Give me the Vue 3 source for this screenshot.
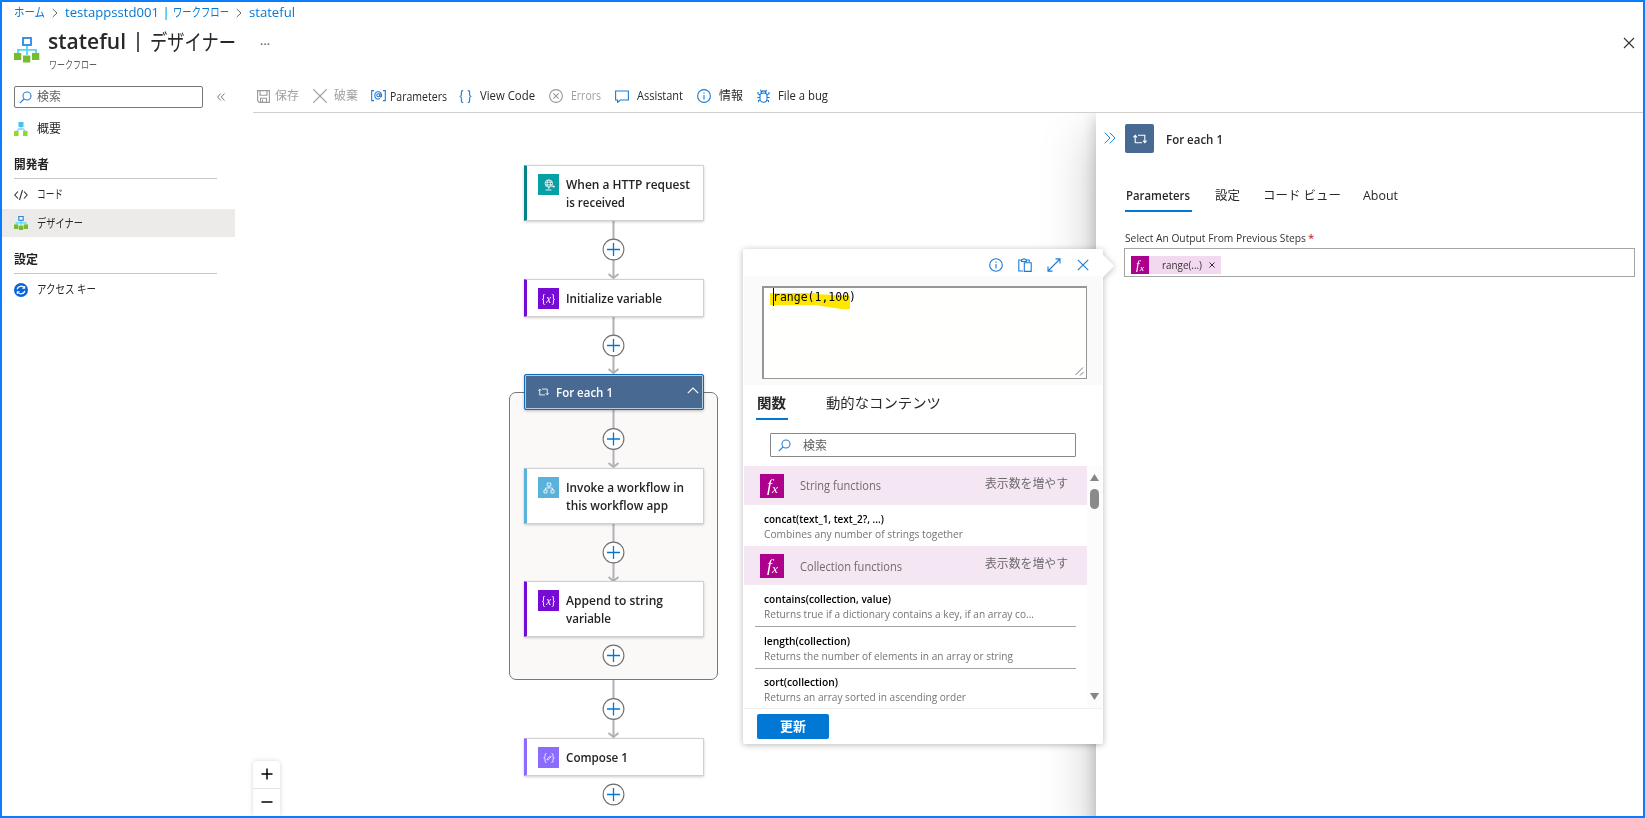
<script setup>
// Condenses or widens a run of text to a given width in pixels.
const vFit = {
  mounted(el, { value }) {
    const natural = el.getBoundingClientRect().width
    if (!natural) return
    el.style.transform = `scaleX(${value / natural})`
    el.style.marginRight = `${value - natural}px`
  }
}

const tools = [
  { icon: 'save', label: '保存', w: 24, off: true },
  { icon: 'discard', label: '破棄', w: 24, off: true },
  { icon: 'params', label: 'Parameters', w: 57 },
  { icon: 'braces', label: 'View Code', w: 55 },
  { icon: 'errors', label: 'Errors', w: 30, off: true },
  { icon: 'chat', label: 'Assistant', w: 46 },
  { icon: 'info', label: '情報', w: 24 },
  { icon: 'bug', label: 'File a bug', w: 50 }
]

const nodes = [
  { kind: 'http', top: 165, tall: true, lines: [['When a HTTP request', 124], ['is received', 59]] },
  { kind: 'variable', top: 279, lines: [['Initialize variable', 96]] },
  { kind: 'invoke', top: 468, tall: true, lines: [['Invoke a workflow in', 118], ['this workflow app', 102]] },
  { kind: 'variable', top: 581, tall: true, lines: [['Append to string', 97], ['variable', 45]] },
  { kind: 'compose', top: 738, lines: [['Compose 1', 62]] }
]

const edges = [[221, 278], [317, 373], [410, 467], [524, 581], [680, 737]]
const plusYs = [249.5, 345.5, 439, 552.5, 655.5, 709, 794.5]
</script>

<template>
  <div class="portal">
    <nav class="crumbs">
      <span v-fit="31">ホーム</span>
      <svg class="c1" width="6" height="10" viewBox="0 0 6 10"><path d="M.7 1 5 5 .7 9" /></svg>
      <span class="lat" v-fit="94">testappsstd001</span>
      <span class="bar">|</span>
      <span v-fit="56">ワークフロー</span>
      <svg class="c2" width="6" height="10" viewBox="0 0 6 10"><path d="M.7 1 5 5 .7 9" /></svg>
      <span class="lat" v-fit="46">stateful</span>
    </nav>

    <header class="head">
      <svg class="logo" width="26" height="26" viewBox="0 0 26 26">
        <path d="M13 9v9M4 17v-4.2h18V17" fill="none" stroke="#50d8f7" stroke-width="1.8" />
        <rect x="9" y="1" width="8" height="7" fill="#fff" stroke="#2f86dc" stroke-width="1.8" />
        <path d="M0 16h7.3v7H0zM9 18.500h7.3v7H9zM18 16h7.300v7H18z" fill="#76bc2d" />
      </svg>
      <div class="titles">
        <h1><span class="strong" v-fit="78">stateful</span><i></i><span v-fit="86">デザイナー</span></h1>
        <p><span v-fit="48">ワークフロー</span></p>
      </div>
      <span class="dots">…</span>
      <svg class="close" width="12" height="12" viewBox="0 0 12 12"><path d="M1 1l10 10M11 1 1 11" /></svg>
    </header>

    <div class="body">
      <aside>
        <div class="find-row">
          <div class="find">
            <svg width="13" height="13" viewBox="0 0 13 13"><circle cx="8" cy="5" r="4" /><path d="M5 8 .8 12.200" /></svg>
            <span v-fit="24">検索</span>
          </div>
          <svg class="fold" width="8" height="8" viewBox="0 0 8 8"><path d="M3.800.5.6 4l3.200 3.500M7.500.5 4.300 4l3.200 3.500" /></svg>
        </div>
        <div class="item first">
          <svg width="14" height="14" viewBox="0 0 14 14"><path d="M7 5v3M2.500 10l2-3h5l2 3" fill="none" stroke="#8bd9ef" stroke-width="1.500" /><path d="M4.500 0h5v5h-5z" fill="#45c3ee" /><path d="M0 9h4.500v5H0zM9 9h4.500v5H9z" fill="#8fdc1f" /></svg>
          <span v-fit="24">概要</span>
        </div>
        <h2 class="h-dev"><span v-fit="35">開発者</span></h2>
        <div class="item code">
          <svg width="14" height="12" viewBox="0 0 14 12"><path d="M4 2.500.8 6 4 9.500M10 2.500 13.200 6 10 9.500M8.500 1l-3 10" fill="none" stroke="#333" stroke-width="1.100" /></svg>
          <span v-fit="26">コード</span>
        </div>
        <div class="item active">
          <svg width="14" height="14" viewBox="0 0 26 26">
            <path d="M13 9v9M4 17v-4.200h18V17" fill="none" stroke="#50d8f7" stroke-width="2" />
            <rect x="9" y="1" width="8" height="7" fill="#fff" stroke="#2f86dc" stroke-width="2.200" />
            <path d="M0 16h8v8H0zM9 18h8v8H9zM18 16h8v8h-8z" fill="#76bc2d" />
          </svg>
          <span v-fit="46">デザイナー</span>
        </div>
        <h2 class="h-set"><span v-fit="24">設定</span></h2>
        <div class="item keys">
          <svg width="14" height="14" viewBox="0 0 14 14"><circle cx="7" cy="7" r="7" fill="#0a62dc" /><path d="M3.300 6.300C3.600 3 8.500 2 10.500 5M10.700 7.700c-.3 3.300-5.200 4.300-7.200 1.300" fill="none" stroke="#fff" stroke-width="1.300" /><path d="M10.700 3v2.300H8.300M3.300 11V8.700h2.400" fill="none" stroke="#fff" stroke-width="1.100" /></svg>
          <span v-fit="59">アクセス キー</span>
        </div>
      </aside>

      <main>
        <div class="toolbar">
          <div v-for="t in tools" :key="t.icon" class="tool" :class="[t.icon, { off: t.off }]">
            <svg v-if="t.icon === 'save'" width="13" height="13" viewBox="0 0 13 13"><path d="M.6.6h11.800v11.800H2.300L.6 10.700zM3 .6v4.700h7V.6M3.500 12V8.300h6V12M5.500 9.500v2.700" /></svg>
            <svg v-else-if="t.icon === 'discard'" width="14" height="14" viewBox="0 0 14 14"><path d="M.3.3l13.400 13.400M13.700.3.3 13.700" /></svg>
            <svg v-else-if="t.icon === 'params'" width="15" height="12" viewBox="0 0 15 12"><path d="M3 .6H.7v10H3M12 .6h2.300v10H12" /><circle cx="7.300" cy="5.300" r="1.500" /><path d="M9 3.500v2.800c.2 1.100 1.600.8 1.600-.8 0-5.200-6.800-4.700-6.800 0 0 3.300 2.800 4.100 5 3" /></svg>
            <svg v-else-if="t.icon === 'braces'" width="13" height="13" viewBox="0 0 13 13"><path d="M4.200.6H3.600Q2.400.6 2.400 2v2.800Q2.400 6.500.6 6.500 2.400 6.500 2.400 8.200V11q0 1.400 1.200 1.400h.6M8.800.6h.6q1.200 0 1.200 1.400v2.800q0 1.700 1.800 1.700-1.800 0-1.800 1.700V11q0 1.400-1.200 1.400h-.6" /></svg>
            <svg v-else-if="t.icon === 'errors'" width="14" height="14" viewBox="0 0 14 14"><circle cx="7" cy="7" r="6.400" /><path d="M4.300 4.300l5.400 5.400M9.700 4.300 4.300 9.700" /></svg>
            <svg v-else-if="t.icon === 'chat'" width="14" height="13" viewBox="0 0 14 13"><path d="M.6 1h12.800v9H5.300L2.600 12.400V10h-2z" /></svg>
            <svg v-else-if="t.icon === 'info'" width="14" height="14" viewBox="0 0 14 14"><circle cx="7" cy="7" r="6.400" /><path d="M7 6v4.500M7 3.500v1.200" /></svg>
            <svg v-else width="13" height="14" viewBox="0 0 13 14"><path d="M3 6.500C3 4.600 4.300 4 6.500 4s3.500.6 3.500 2.500v3c0 2.200-1.400 3.800-3.500 3.800S3 11.700 3 9.500zM4 4c0-2.800 5-2.800 5 0M3 6 1 4.700V3M10 6l2-1.300V3M3 8.500H.3M10 8.500h2.700M3.400 10.700l-1.900 1v1.500M9.600 10.700l1.900 1v1.500M4.300 2.500 3.500.7M8.700 2.500 9.500.7" /></svg>
            <span v-fit="t.w">{{ t.label }}</span>
          </div>
        </div>
      </main>
    </div>

    <!-- Designer canvas -->
    <section class="canvas">
      <div class="scope"></div>
      <svg class="wires" width="1645" height="818" viewBox="0 0 1645 818">
        <g v-for="e in edges" :key="e[0]" fill="none" stroke="#b1b1b7" stroke-width="2">
          <path :d="`M613.500 ${e[0]}V${e[1]}`" />
          <path :d="`M608.500 ${e[1] - 4}l5 4 5-4`" />
        </g>
        <g v-for="y in plusYs" :key="y">
          <circle cx="613.500" :cy="y" r="10.400" fill="#fff" stroke="#707070" stroke-width="1.100" />
          <path :d="`M607 ${y}h13M613.500 ${y - 6.5}v13`" stroke="#0078d4" stroke-width="1.300" />
        </g>
      </svg>

      <div v-for="n in nodes" :key="n.top" class="node" :class="[n.kind, { tall: n.tall }, 'y' + n.top]">
        <div class="tile">
          <svg v-if="n.kind === 'http'" width="12" height="12" viewBox="0 0 12 12"><circle cx="5.800" cy="4.500" r="3.700" /><path d="M2.100 3.300h7.400M2.100 5.800h7.400M5.800.8c-2.300 2-2.300 5.500 0 7.400 2.300-2 2.300-5.400 0-7.400M5.800 8v2.500M2.500 11h6M9 7.500h2.500M10.500 6.300l1.200 1.200-1.200 1.200" /></svg>
          <svg v-else-if="n.kind === 'invoke'" width="12" height="12" viewBox="0 0 12 12"><path d="M4.200 1h3.600v3H4.200zM1 8h3v3H1zM8 8h3v3H8zM6 4v2M2.500 8V6h7v2" /></svg>
          <svg v-else-if="n.kind === 'compose'" width="12" height="12" viewBox="0 0 12 12"><path d="M3.500 1.500Q2 1.500 2 3v1.500Q2 6 .7 6 2 6 2 7.500V9q0 1.500 1.500 1.500M8.500 1.500Q10 1.500 10 3v1.500Q10 6 11.300 6 10 6 10 7.500V9q0 1.500-1.500 1.500M4 8l.4-1.400L7.300 4l.8.800-2.800 2.800z" /></svg>
          <span v-else class="var" v-fit="15">{<em>x</em>}</span>
        </div>
        <div class="name"><div v-for="l in n.lines" :key="l[0]"><span v-fit="l[1]">{{ l[0] }}</span></div></div>
      </div>

      <div class="foreach">
        <svg width="11" height="8" viewBox="0 0 14 10"><path d="M2.200 9V1.500M.4 3.300 2.200 1.300 4 3.300M5 1.300h6.800V8.500M13.600 6.700l-1.800 2-1.800-2M9 8.700H2.200" /></svg>
        <span v-fit="57">For each 1</span>
        <svg class="up" width="12" height="7" viewBox="0 0 12 7"><path d="M.8 6.200 6 1l5.200 5.200" /></svg>
      </div>

      <div class="zoomer"><b><svg width="12" height="12" viewBox="0 0 12 12"><path d="M.5 6h11M6 .5v11" /></svg></b><b><svg width="12" height="12" viewBox="0 0 12 12"><path d="M.5 6h11" /></svg></b></div>
    </section>

    <!-- Action details -->
    <div class="panel-clip">
      <section class="panel">
        <div class="p-head">
          <svg class="chev" width="12" height="12" viewBox="0 0 12 12"><path d="M.8.7 6 6 .8 11.300M5.800.7 11 6l-5.200 5.300" /></svg>
          <div class="p-icon"><svg width="14" height="10" viewBox="0 0 14 10"><path d="M2.200 9V1.500M.4 3.300 2.200 1.300 4 3.300M5 1.300h6.800V8.500M13.600 6.700l-1.800 2-1.800-2M9 8.700H2.200" /></svg></div>
          <span class="p-name"><span v-fit="57">For each 1</span></span>
        </div>
        <div class="p-tabs">
          <span class="on"><span v-fit="64">Parameters</span></span>
          <span v-fit="25">設定</span>
          <i></i>
          <span v-fit="78">コード ビュー</span>
          <i></i>
          <span v-fit="35">About</span>
        </div>
        <div class="p-label"><span v-fit="181">Select An Output From Previous Steps</span><i>*</i></div>
        <div class="p-input">
          <div class="chip"><span class="fx"><span v-fit="8">f<sub>x</sub></span></span><span class="ct" v-fit="40">range(...)</span><svg width="6" height="6" viewBox="0 0 6 6"><path d="M.5.5l5 5M5.500.5l-5 5" /></svg></div>
        </div>
      </section>
    </div>

    <!-- Expression editor callout -->
    <section class="callout">
      <div class="beak"></div>
      <div class="sheet">
        <div class="acts">
          <svg width="14" height="14" viewBox="0 0 14 14"><circle cx="7" cy="7" r="6.300" /><path d="M7 6v4.500M7 3.500v1.200" /></svg>
          <svg width="14" height="14" viewBox="0 0 14 14"><path d="M5 13H.8V2h2.700M8.500 2h2.700v2M3.500 3.500V1.700h1.300C5 .4 7 .4 7.200 1.700h1.300v1.800zM6.300 4.700h6.900v8.700H6.300z" /></svg>
          <svg width="14" height="14" viewBox="0 0 14 14"><path d="M1 13 13 1M8.500.9H13v4.500M1 8.600v4.500h4.500" /></svg>
          <svg width="12" height="12" viewBox="0 0 12 12"><path d="M.8.8l10.400 10.400M11.200.8.8 11.200" /></svg>
        </div>
        <div class="edit">
          <div class="area">
            <svg class="mark" width="80" height="17" viewBox="0 0 80 17"><path d="M0 0h45v1l35 2v13h-9l-26-4H0z" /></svg>
            <span class="expr" v-fit="83">range(1,100)</span>
            <svg class="grip" width="9" height="9" viewBox="0 0 9 9"><path d="M.5 8 8 .5M5 8.500 8.500 5" /></svg>
          </div>
        </div>
        <div class="tabs"><span class="on"><span v-fit="29">関数</span></span><span class="dyn" v-fit="115">動的なコンテンツ</span></div>
        <div class="search"><svg width="13" height="13" viewBox="0 0 13 13"><circle cx="8" cy="5" r="4" /><path d="M5 8 .8 12.200" /></svg><span v-fit="24">検索</span></div>
        <div class="list">
          <div class="rows">
            <div class="group"><span class="fx"><span v-fit="11">f<sub>x</sub></span></span><span class="gn" v-fit="81">String functions</span><span class="more"><span v-fit="83">表示数を増やす</span></span></div>
            <div class="fn last"><b><span v-fit="120">concat(text_1, text_2?, ...)</span></b><p><span v-fit="199">Combines any number of strings together</span></p></div>
            <div class="group second"><span class="fx"><span v-fit="11">f<sub>x</sub></span></span><span class="gn" v-fit="102">Collection functions</span><span class="more"><span v-fit="83">表示数を増やす</span></span></div>
            <div class="fn"><b><span v-fit="127">contains(collection, value)</span></b><p><span v-fit="270">Returns true if a dictionary contains a key, if an array co...</span></p></div>
            <div class="fn"><b><span v-fit="86">length(collection)</span></b><p><span v-fit="249">Returns the number of elements in an array or string</span></p></div>
            <div class="fn last end"><b><span v-fit="74">sort(collection)</span></b><p><span v-fit="202">Returns an array sorted in ascending order</span></p></div>
          </div>
          <div class="scroll"><svg width="9" height="7" viewBox="0 0 9 7"><path d="M4.500 0 9 7H0z" /></svg><i></i><svg class="dn" width="9" height="7" viewBox="0 0 9 7"><path d="M0 0h9L4.500 7z" /></svg></div>
        </div>
        <div class="foot"><button><span v-fit="26">更新</span></button></div>
      </div>
    </section>
  </div>
</template>

<style>
html, body { margin: 0; overflow: hidden; }
</style>

<style scoped>
* { box-sizing: border-box; }
.portal {
  position: relative; width: 1645px; height: 818px; overflow: hidden; background: #fff;
  border: 2px solid #0a7cff; color: #292827;
  font: 12px/16px "Open Sans", "Noto Sans", "Noto Sans CJK JP", sans-serif;
}
.portal span { display: inline-block; flex: none; white-space: nowrap; transform-origin: 0 50%; }
svg { display: block; flex: none; }
p, h1, h2 { margin: 0; font-weight: 400; }

.crumbs { display: flex; align-items: center; height: 20px; padding: 1px 0 0 12px; color: #0078d4; font-size: 12.500px; }
.crumbs svg { fill: none; stroke: #666; margin: 0 7px; }
.crumbs .bar { width: 14px; text-align: center; }
.crumbs .c2 { margin: 0 7px; }

.head { display: flex; height: 52px; padding-left: 12px; }
.logo { margin-top: 15px; }
.titles { width: 208px; padding-left: 8px; }
h1 { display: flex; align-items: center; height: 35px; padding-top: 3px; font-size: 22px; line-height: 30px; }
h1 i { flex: none; width: 2px; height: 20px; background: #555; margin: 1px 11px 0 11px; }
.strong { font-weight: 600; font-size: 21px; }
.titles p { font-size: 11px; line-height: 14px; padding-left: 1px; margin-top: 1px; color: #605e5c; }
.dots { margin: 10px 0 0 12px; color: #555; font-size: 13px; }
.close { margin: 15px 8px 0 auto; fill: none; stroke: #333; stroke-width: 1.100; }

.body { display: flex; }
aside { width: 233px; }
.find-row { display: flex; align-items: center; padding: 12px 0 0 12px; height: 34px; }
.find { display: flex; align-items: center; gap: 5px; width: 189px; height: 22px; padding-left: 4px; border: 1px solid #777; border-radius: 2px; color: #605e5c; }
.find svg, .search svg { fill: none; stroke: #2f7fd0; stroke-width: 1.100; }
.fold { margin-left: 14px; fill: none; stroke: #666; stroke-width: .9; }
.item { display: flex; align-items: center; gap: 8.500px; height: 28px; padding-left: 12px; }
.item.first { margin-top: 7px; }
h2 { margin-left: 12px; width: 203px; height: 22px; border-bottom: 1px solid #c8c6c4; font-weight: 700; font-size: 12px; line-height: 16px; color: #222; }
.h-dev { margin-top: 14px; }
.item.code { margin-top: 2px; }
.active { background: #edebe9; }
.active span { padding-top: 1px; }
.h-set { margin-top: 15px; }
.item.keys { margin-top: 2px; }

main { width: 1390px; margin-left: 18px; }
.toolbar { display: flex; height: 39px; padding: 6px 0 0 4px; border-bottom: 1px solid #d2d0ce; }
.tool { display: flex; align-items: center; height: 32px; margin-left: 14px; }
.tool svg { fill: none; stroke: #1a7bd6; stroke-width: 1.100; margin-right: 8px; }
.tool.save { margin-left: 0; }
.tool.save svg { margin-right: 5px; }
.tool.discard svg { margin-right: 7px; }
.tool.params { margin-left: 13px; }
.tool.params svg { margin-right: 4px; }
.tool.params span { padding-top: 1px; }
.tool.braces { margin-left: 12px; }
.off { color: #a19f9d; }
.tool.off svg { stroke: #999; }

.canvas { position: absolute; inset: 0; pointer-events: none; margin: -2px; }
.scope { position: absolute; left: 509px; top: 392px; width: 209px; height: 288px; border: 1px solid #777; border-radius: 7px; background: #faf9f8; }
.wires { position: absolute; left: 0; top: 0; }
.node { position: absolute; left: 524px; width: 180px; height: 38px; display: flex; padding: 8px 0 0 11px; background: #fff; border: 1px solid #d0d0d0; border-left: 3px solid #770bd6; box-shadow: 0 1px 3px rgba(0,0,0,.2); border-radius: 1px; }
.node.tall { height: 56px; }
.y165 { top: 165px; } .y279 { top: 279px; } .y468 { top: 468px; } .y581 { top: 581px; } .y738 { top: 738px; }
.tile { display: flex; align-items: center; justify-content: center; width: 21px; height: 21px; margin-right: 7px; background: #770bd6; }
.tile svg { fill: none; stroke: #fff; stroke-width: .8; }
.http { border-left-color: #07828b; } .http .tile { background: #07a0a5; }
.invoke { border-left-color: #59b2d9; } .invoke .tile { background: #59b2d9; }
.compose { border-left-color: #8c6cff; } .compose .tile { background: #8c6cff; }
.tile .var { color: #fff; font: 12px/18px "Liberation Serif", serif; }
.name { font-size: 13px; line-height: 18px; font-weight: 600; padding-top: 1px; color: #242424; }
.name div { height: 18px; }
.foreach { position: absolute; left: 524px; top: 374px; width: 180px; height: 36px; display: flex; align-items: center; gap: 7px; padding: 0 4px 1px 13px; background: #486991; color: #fff; border: 1px solid #0f6cbd; box-shadow: inset 0 0 0 1px #b8cce0, 0 1px 3px rgba(0,0,0,.25); border-radius: 2px; font-weight: 600; font-size: 13px; }
.foreach svg { fill: none; stroke: #fff; stroke-width: 1.100; }
.foreach .up { margin: -3px 0 0 auto; }
.zoomer { position: absolute; left: 253px; top: 761px; width: 27px; height: 55px; border-radius: 4px 4px 0 0; background: #fff; box-shadow: 0 0 5px rgba(0,0,0,.16); clip-path: inset(-6px -6px 0 -6px); }
.zoomer b { display: flex; align-items: center; justify-content: center; height: 27px; padding-bottom: 1px; }
.zoomer b + b { border-top: 1px solid #e4e4e4; padding: 0; }
.zoomer svg { fill: none; stroke: #000; stroke-width: 1.500; }

.panel-clip { position: absolute; left: 950px; top: 111px; width: 693px; height: 703px; overflow: hidden; padding-left: 144px; pointer-events: none; }
.panel { height: 720px; background: #fff; box-shadow: 0 20px 50px rgba(0,0,0,.25), 0 5px 14px rgba(0,0,0,.2); padding: 11px 8px 0; }
.p-head { display: flex; align-items: center; height: 29px; font-weight: 600; font-size: 12.500px; }
.chev { fill: none; stroke: #1a86dd; margin: -2px 9px 0 0; }
.p-icon { display: flex; align-items: center; justify-content: center; width: 29px; height: 29px; margin-right: 12px; background: #486991; border-radius: 2px; }
.p-icon svg { fill: none; stroke: #fff; stroke-width: 1.100; }
.p-name { padding-top: 2px; }
.p-tabs { display: flex; height: 32px; margin: 26px 0 0 21px; font-size: 12.500px; line-height: 33px; }
.p-tabs .on { width: 67px; height: 33px; border-bottom: 2px solid #0078d4; font-weight: 600; margin-right: 23px; padding-left: 1px; }
.p-tabs i { width: 22.500px; }
.p-label { display: flex; height: 20px; line-height: 20px; margin: 17px 0 0 21px; font-size: 11.500px; color: #333; }
.p-label i { color: #c50f1f; font-style: normal; margin-left: 2px; }
.p-input { margin: 0 0 0 20px; width: 511px; height: 29px; border: 1px solid #a5a5a5; padding: 7px 6px; }
.chip { display: flex; align-items: center; width: 90px; height: 18px; background: #f2d9ef; font-size: 11.500px; color: #333; }
.chip .ct { margin-left: 13px; }
.chip svg { margin-left: 7px; fill: none; stroke: #333; }
.fx { background: #ad008c; color: #fff; display: flex !important; align-items: center; justify-content: center; font: italic 17px/20px "Liberation Serif", serif; }
.fx sub { font-size: .75em; line-height: 0; vertical-align: -2px; }
.chip .fx { width: 18px; height: 18px; font-size: 12px; }

.callout { position: absolute; left: 741px; top: 247px; width: 360px; height: 495px; filter: drop-shadow(0 1px 3px rgba(0,0,0,.28)); }
.beak { position: absolute; right: -8px; top: 9px; width: 16px; height: 16px; background: #fff; transform: rotate(45deg); }
.sheet { position: relative; height: 495px; background: #fff; padding: 0 1px; border-radius: 2px; display: flex; flex-direction: column; }
.acts { display: flex; align-items: center; justify-content: flex-end; gap: 15px; height: 27px; padding: 5px 13px 0 0; }
.acts svg { fill: none; stroke: #1a7bd6; stroke-width: 1.100; }
.acts svg:last-child { margin-left: 1px; }
.edit { height: 109px; background: #fafafa; padding: 10px 0 0 18px; }
.area { position: relative; width: 325px; height: 93px; background: #fffffe; border: solid #979797; border-width: 2px 1px 1px 2px; padding: 0 0 0 9px; }
.mark { position: absolute; left: 6px; top: 5px; fill: #ffe600; }
.expr { position: relative; font: 12px/18px "DejaVu Sans Mono", monospace; color: #000; box-shadow: inset 1px 0 #000; }
.grip { position: absolute; right: 2px; bottom: 2px; fill: none; stroke: #777; }
.tabs { display: flex; height: 35px; padding-left: 12px; font-size: 14px; line-height: 35px; }
.tabs .on { width: 32px; height: 35px; border-bottom: 2px solid #0078d4; font-weight: 700; padding-left: 1px; }
.tabs .dyn { margin-left: 38px; }
.search { display: flex; align-items: center; gap: 12px; height: 24px; width: 306px; margin: 13px 0 9px 26px; padding-left: 7px; border: 1px solid #888; border-radius: 1px; color: #605e5c; }
.search span { padding-top: 1px; }
.list { display: flex; height: 242px; }
.rows { width: 343px; }
.group { display: flex; height: 39px; align-items: center; background: #f5e6f4; padding: 0 19px 0 16px; color: #6e6b6e; }
.group .fx { width: 24px; height: 24px; }
.gn { margin-left: 16px; padding-top: 1px; }
.second .gn { padding-top: 2px; }
.second { padding-top: 1px; }
.group .more { margin-left: auto; padding-bottom: 4px; }
.fn { display: flex; flex-direction: column; height: 42px; margin: 0 11px; padding: 6px 0 0 9px; font-size: 11px; line-height: 15px; border-bottom: 1px solid #a6a6a6; }
.fn b { color: #000; font-weight: 600; height: 15px; }
.fn p { color: #757575; height: 15px; }
.fn.last { border: 0; height: 41px; }
.fn.end { padding-top: 5px; }
.scroll { display: flex; flex-direction: column; align-items: center; width: 15px; padding: 8px 0 8px; background: #fcfcfc; }
.scroll svg { fill: #858585; }
.scroll i { width: 9px; height: 20px; margin-top: 8px; border-radius: 5px; background: #8a8a8a; }
.scroll .dn { margin-top: auto; }
.foot { border-top: 1px solid #eee; padding: 5px 0 0 13px; }
button { display: flex; align-items: center; justify-content: center; width: 72px; height: 25px; padding: 0 0 2px; border: 0; border-radius: 2px; background: #0078d4; color: #fff; font: 700 13px/20px "Noto Sans CJK JP", sans-serif; }
</style>
